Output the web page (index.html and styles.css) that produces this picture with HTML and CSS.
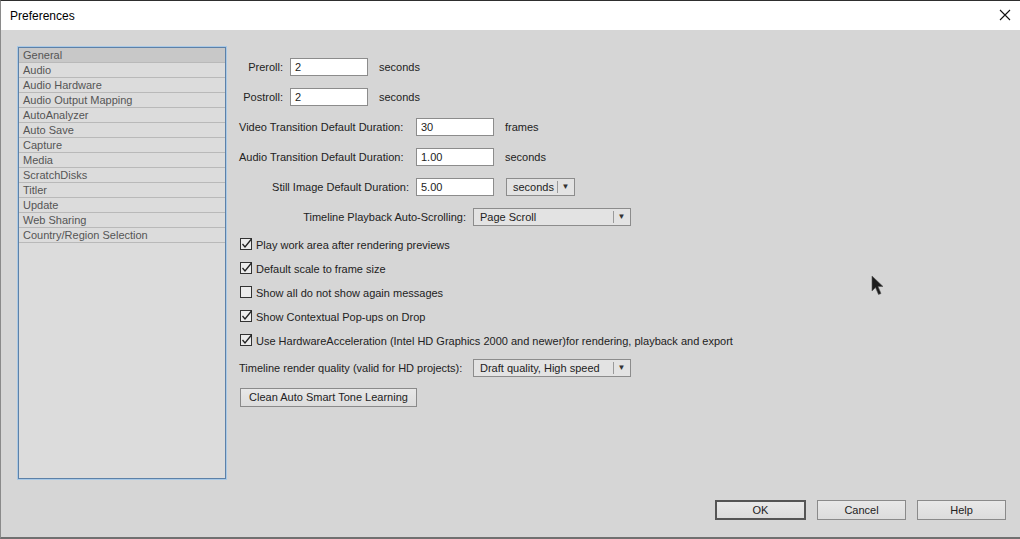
FILE: index.html
```html
<!DOCTYPE html>
<html lang="en">
<head>
  <meta charset="utf-8">
  <title>Preferences</title>
  <link rel="stylesheet" href="styles.css">
</head>
<body>
  <div class="window">
    <div class="titlebar">
      <span class="title">Preferences</span>
      <svg class="close" width="12" height="12" viewBox="0 0 12 12"><path d="M1 1L11 11M11 1L1 11" stroke="#111" stroke-width="1.1"/></svg>
    </div>
    <div class="main">
      <ul class="sidebar">
        <li class="selected">General</li>
        <li>Audio</li>
        <li>Audio Hardware</li>
        <li>Audio Output Mapping</li>
        <li>AutoAnalyzer</li>
        <li>Auto Save</li>
        <li>Capture</li>
        <li>Media</li>
        <li>ScratchDisks</li>
        <li>Titler</li>
        <li>Update</li>
        <li>Web Sharing</li>
        <li>Country/Region Selection</li>
      </ul>
      <div class="form">
        <div class="row">
          <span class="label w-short">Preroll:</span>
          <span class="field">2</span>
          <span class="unit">seconds</span>
        </div>
        <div class="row">
          <span class="label w-short">Postroll:</span>
          <span class="field">2</span>
          <span class="unit">seconds</span>
        </div>
        <div class="row">
          <span class="label w-mid left">Video Transition Default Duration:</span>
          <span class="field">30</span>
          <span class="unit">frames</span>
        </div>
        <div class="row">
          <span class="label w-mid left">Audio Transition Default Duration:</span>
          <span class="field">1.00</span>
          <span class="unit">seconds</span>
        </div>
        <div class="row">
          <span class="label w-mid">Still Image Default Duration:</span>
          <span class="field">5.00</span>
          <span class="dropdown small"><span class="value">seconds</span><span class="arrow">&#9660;</span></span>
        </div>
        <div class="row">
          <span class="label w-long">Timeline Playback Auto-Scrolling:</span>
          <span class="dropdown wide"><span class="value">Page Scroll</span><span class="arrow">&#9660;</span></span>
        </div>

        <div class="checks">
          <label class="check"><svg width="13" height="13" viewBox="0 0 13 13"><rect x="0.5" y="0.5" width="11" height="11" fill="#ececec" stroke="#333"/><path d="M2.5 6L5 9L11.5 1" fill="none" stroke="#222" stroke-width="1.3"/></svg>Play work area after rendering previews</label>
          <label class="check"><svg width="13" height="13" viewBox="0 0 13 13"><rect x="0.5" y="0.5" width="11" height="11" fill="#ececec" stroke="#333"/><path d="M2.5 6L5 9L11.5 1" fill="none" stroke="#222" stroke-width="1.3"/></svg>Default scale to frame size</label>
          <label class="check"><svg width="13" height="13" viewBox="0 0 13 13"><rect x="0.5" y="0.5" width="11" height="11" fill="#ececec" stroke="#333"/></svg>Show all do not show again messages</label>
          <label class="check"><svg width="13" height="13" viewBox="0 0 13 13"><rect x="0.5" y="0.5" width="11" height="11" fill="#ececec" stroke="#333"/><path d="M2.5 6L5 9L11.5 1" fill="none" stroke="#222" stroke-width="1.3"/></svg>Show Contextual Pop-ups on Drop</label>
          <label class="check"><svg width="13" height="13" viewBox="0 0 13 13"><rect x="0.5" y="0.5" width="11" height="11" fill="#ececec" stroke="#333"/><path d="M2.5 6L5 9L11.5 1" fill="none" stroke="#222" stroke-width="1.3"/></svg>Use HardwareAcceleration (Intel HD Graphics 2000 and newer)for rendering, playback and export</label>
        </div>

        <div class="row quality">
          <span class="label w-long left">Timeline render quality (valid for HD projects):</span>
          <span class="dropdown wide"><span class="value">Draft quality, High speed</span><span class="arrow">&#9660;</span></span>
        </div>
        <div class="row">
          <span class="button learn">Clean Auto Smart Tone Learning</span>
        </div>
      </div>
    </div>
    <div class="footer">
      <span class="button default">OK</span>
      <span class="button">Cancel</span>
      <span class="button">Help</span>
    </div>
    <svg class="cursor" width="14" height="22" viewBox="0 0 14 22"><path d="M1 1L1 16L4.5 12.5L7.5 19.5L10 18.5L7 11.5L12 11.5Z" fill="#1c1c1c" stroke="#555" stroke-width="0.6"/></svg>
  </div>
</body>
</html>
```

FILE: styles.css
```css
body {
  margin: 0;
  font-family: 'Liberation Sans', Arial, sans-serif;
  background-color: #d6d6d6;
}

.window {
  position: relative;
  height: 539px;
  box-sizing: border-box;
  border-top: 1px solid #2e2e2e;
  border-left: 1px solid #8a8a8a;
  border-bottom: 2px solid #707070;
  display: flex;
  flex-direction: column;
  background-color: #d6d6d6;
}

.titlebar {
  height: 29px;
  background-color: #fff;
  display: flex;
  align-items: center;
  justify-content: space-between;
  padding: 0 9px 0 9px;
  font-size: 12px;
  color: #000;
}

.close {
  margin-top: -2px;
}

.main {
  flex: 1;
  display: flex;
  padding: 17px 0 0 17px;
}

.sidebar {
  list-style: none;
  margin: 0;
  padding: 0;
  width: 206px;
  height: 430px;
  background-color: #dcdcdc;
  border: 1px solid #5d81a8;
  box-shadow: 0 0 0 1px #a9c9e6;
  font-size: 11px;
  color: #555;
}

.sidebar li {
  height: 14px;
  line-height: 14px;
  padding-left: 4px;
  border-bottom: 1px solid #b9b9b9;
}

.sidebar li.selected {
  background-color: #c8c8c8;
}

.form {
  margin-left: 13px;
  padding-top: 11px;
  font-size: 11px;
  color: #222;
}

.row {
  display: flex;
  align-items: center;
  height: 18px;
  margin-bottom: 12px;
}

.label {
  text-align: right;
  margin-right: 7px;
  white-space: nowrap;
}

.label.left {
  text-align: left;
}

.w-short { width: 44px; }
.w-mid { width: 170px; }
.w-long { width: 227px; }

.field {
  width: 72px;
  height: 16px;
  line-height: 16px;
  padding-left: 4px;
  background-color: #fff;
  border: 1px solid #8c8c8c;
}

.unit {
  margin-left: 11px;
}

.dropdown {
  height: 16px;
  line-height: 16px;
  display: flex;
  align-items: center;
  background-color: #e3e3e3;
  border: 1px solid #8c8c8c;
  margin-left: 12px;
}

.row .label + .dropdown {
  margin-left: 0;
}

.dropdown .value {
  flex: 1;
  padding-left: 6px;
}

.dropdown .arrow {
  font-size: 8px;
  width: 15px;
  text-align: center;
  border-left: 1px solid #9a9a9a;
  height: 12px;
  line-height: 12px;
  margin-right: 1px;
  color: #333;
}

.dropdown.small { width: 67px; }
.dropdown.wide { width: 156px; }

.checks {
  display: flex;
  flex-direction: column;
  gap: 11px;
  margin-bottom: 12px;
}

.check {
  display: flex;
  align-items: center;
  height: 13px;
  gap: 3px;
  margin-left: 1px;
}

.button {
  display: inline-block;
  box-sizing: border-box;
  height: 19px;
  line-height: 17px;
  text-align: center;
  background: linear-gradient(#e8e8e8, #dcdcdc);
  border: 1px solid #8a8a8a;
  font-size: 11px;
  color: #222;
}

.learn {
  width: 177px;
  margin-left: 1px;
  margin-top: -2px;
}

.footer {
  display: flex;
  justify-content: flex-end;
  gap: 11px;
  padding: 0 14px 17px 0;
}

.footer .button {
  width: 89px;
  height: 20px;
  line-height: 18px;
}

.footer .button.default {
  border: 2px solid #555;
  line-height: 16px;
  width: 91px;
}

.cursor {
  position: absolute;
  left: 870px;
  top: 274px;
}
```
